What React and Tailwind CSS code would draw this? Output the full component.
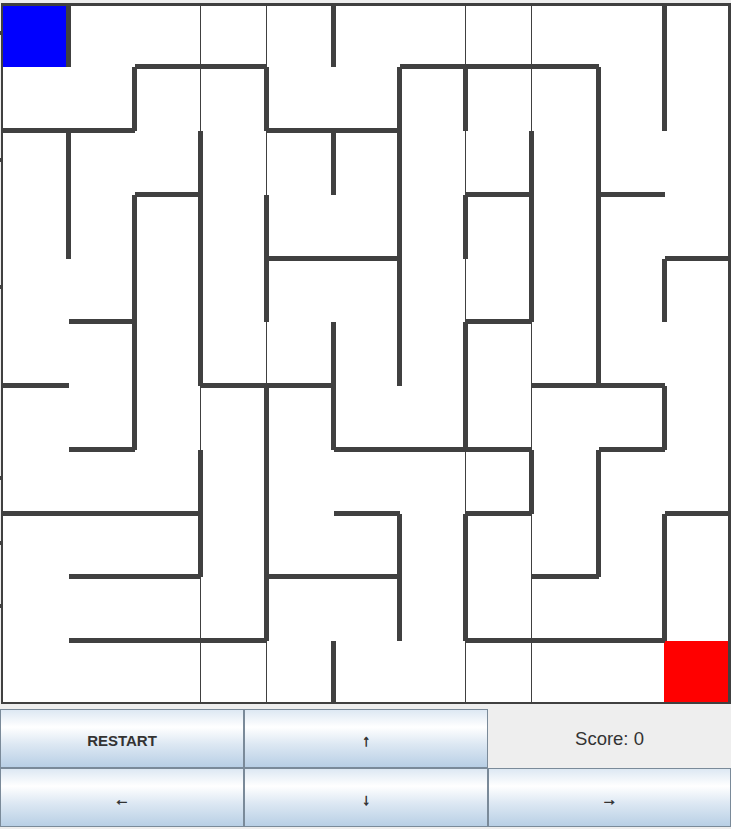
import React from "react";

const X = [3, 68.5, 134.5, 200.5, 266.5, 333.5, 399.5, 465.5, 531.5, 598.5, 664.5, 728];
const Y = [6, 66.5, 130.5, 194.5, 258.5, 321.5, 385.5, 449.5, 513.5, 576.5, 640.5, 702];

// vertical walls: column line -> rows
const V = {
  1: [0, 2, 3],
  2: [1, 3, 4, 5, 6],
  3: [2, 3, 4, 5, 7, 8],
  4: [1, 3, 4, 6, 7, 8, 9],
  5: [0, 2, 5, 6, 10],
  6: [1, 2, 3, 4, 5, 8, 9],
  7: [1, 3, 5, 6, 8, 9],
  8: [2, 3, 4, 7],
  9: [1, 2, 3, 4, 5, 7, 8],
  10: [0, 1, 4, 6, 8, 9],
};

// horizontal walls: row line -> columns
const H = {
  1: [2, 3, 6, 7, 8],
  2: [0, 1, 4, 5],
  3: [2, 7, 9],
  4: [4, 5, 10],
  5: [1, 7],
  6: [0, 3, 4, 8, 9],
  7: [1, 5, 6, 7, 9],
  8: [0, 1, 2, 5, 7, 10],
  9: [1, 2, 4, 5, 8],
  10: [1, 2, 3, 7, 8, 9],
};

const WALL = "#404040";

function Maze() {
  const walls = [];
  Object.entries(V).forEach(([c, rows]) => {
    const ci = Number(c);
    rows.forEach((r) => {
      walls.push(
        <rect
          key={`v-${ci}-${r}`}
          x={X[ci] - 2.5}
          y={Y[r]}
          width={5}
          height={Y[r + 1] - Y[r]}
          fill={WALL}
        />
      );
    });
  });
  Object.entries(H).forEach(([r, cols]) => {
    const ri = Number(r);
    cols.forEach((c) => {
      walls.push(
        <rect
          key={`h-${ri}-${c}`}
          x={X[c]}
          y={Y[ri] - 2.5}
          width={X[c + 1] - X[c]}
          height={5}
          fill={WALL}
        />
      );
    });
  });

  return (
    <svg width="731" height="709" className="block" shapeRendering="crispEdges">
      <rect x="0" y="0" width="731" height="709" fill="#eeeeee" />
      <rect x="1" y="3" width="730" height="701" fill={WALL} />
      <rect x="3" y="6" width="725" height="696" fill="#ffffff" />
      {[200, 266, 465, 531].map((x) => (
        <rect key={`t-${x}`} x={x} y="6" width="1" height="696" fill={WALL} />
      ))}
      <rect x="3" y="6" width="64" height="61" fill="#0000ff" />
      <rect x="664" y="641" width="64" height="61" fill="#ff0000" />
      {walls}
      {[31, 158, 285, 476, 541, 604].map((y) => (
        <rect key={`k-${y}`} x="0" y={y} width="1" height="4" fill={WALL} />
      ))}
    </svg>
  );
}

const btn =
  "flex items-center justify-center border border-[#7a8a99] bg-[linear-gradient(to_bottom,#dde8f3_0%,#ffffff_30%,#dde8f3_60%,#b8cfe5_100%)] text-[#333333] font-bold text-[15px] pt-[5px]";

const arrow = "text-[16px] [-webkit-text-stroke:0.6px_#333333]";

export default function App() {
  return (
    <div
      className="w-[731px] h-[829px] bg-[#eeeeee] overflow-hidden"
      style={{ fontFamily: '"Liberation Sans", Arial, sans-serif' }}
    >
      <Maze />
      <div className="grid grid-cols-[244px_244px_243px] grid-rows-[59px_59px]">
        <div className={btn}>RESTART</div>
        <div className={btn}>
          <span className={arrow}>↑</span>
        </div>
        <div className="flex items-center justify-center text-[18.5px] text-[#333333]">
          Score: 0
        </div>
        <div className={btn}>
          <span className={arrow}>←</span>
        </div>
        <div className={btn}>
          <span className={arrow}>↓</span>
        </div>
        <div className={btn}>
          <span className={arrow}>→</span>
        </div>
      </div>
    </div>
  );
}
